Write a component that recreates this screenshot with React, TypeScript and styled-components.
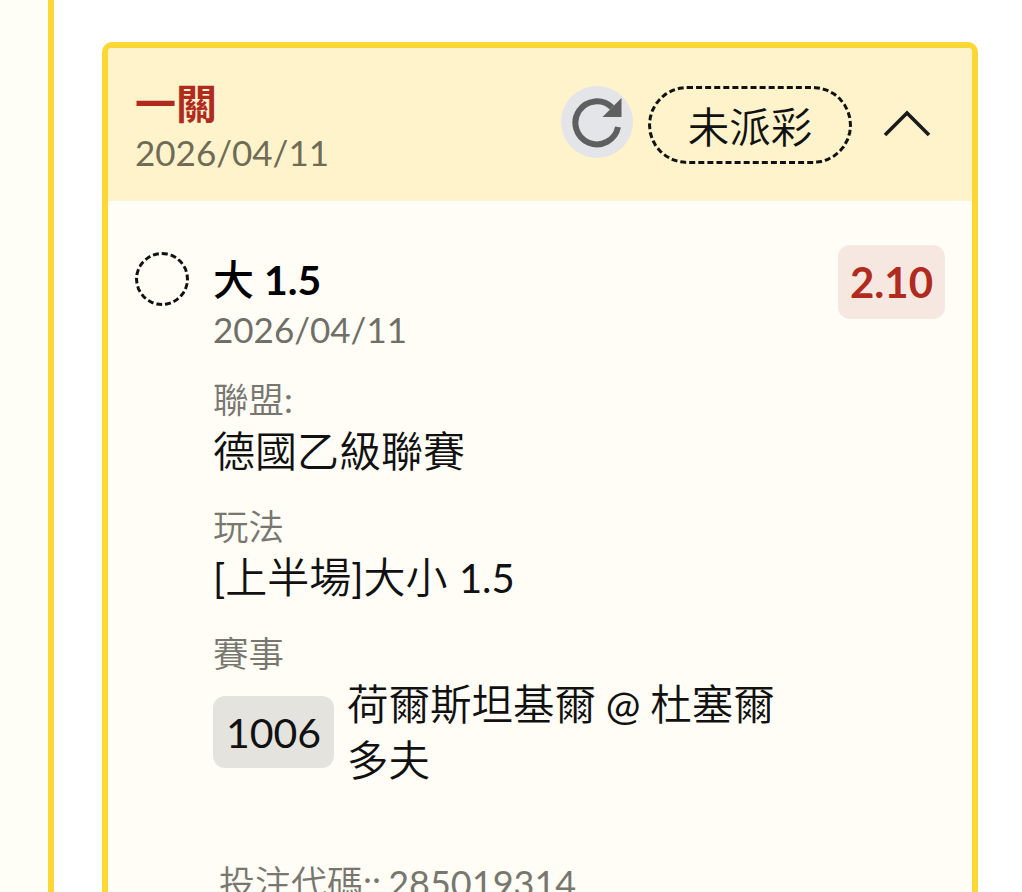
import React from "react";
import styled, { createGlobalStyle } from "styled-components";

const Global = createGlobalStyle`
  html, body { margin: 0; padding: 0; background: #fff; }
  body { font-family: Lato, "Noto Sans CJK TC", sans-serif; }
`;
const Page = styled.div`
  display: flex; width: 1022px; height: 892px; overflow: hidden; background: #fff;
`;
const Rail = styled.div`
  width: 48px; flex: none; background: #fffef6; border-right: 6px solid #fdd835;
`;
const Main = styled.div`
  flex: 1; padding: 42px 44px 0 48px; min-width: 0;
`;
const Card = styled.section`
  border: 6px solid #fdd835; border-radius: 10px; background: #fffdf5; overflow: hidden; height: 1000px;
`;
const Header = styled.header`
  height: 153px; background: #fff3cc; display: flex; align-items: center; padding: 0 40px 0 27px;
`;
const HeadLeft = styled.div`
  flex: 1; padding-top: 4px;
`;
const Title = styled.div`
  font-size: 41px; line-height: 50px; font-weight: 700; color: #b02a1e;
`;
const DateText = styled.div<{ $tone?: string }>`
  font-size: 35px; line-height: 46px; color: ${p => p.$tone || "#6f6b55"};
`;
const SubDate = styled(DateText)`
  margin: 1px 0 -2px;
`;
const RefreshBtn = styled.div`
  width: 72px; height: 72px; border-radius: 50%; background: #e3e5e8; display: flex; align-items: center; justify-content: center;
  margin-right: 15px; margin-top: -5px;
`;
const StatusPill = styled.div`
  width: 204px; height: 78px; box-sizing: border-box; border: 3px dashed #111; border-radius: 39px; font-size: 41.5px; font-weight: 350; color: #111;
  display: flex; align-items: center; justify-content: center; margin-right: 30px;
`;
const Chevron = styled.svg`
  margin-top: -4px; flex: none;
`;
const Body = styled.div`
  padding: 44px 27px 0 27px;
`;
const Row = styled.div`
  display: flex; align-items: flex-start;
`;
const Radio = styled.div`
  width: 54px; height: 54px; flex: none; box-sizing: border-box; border: 3px dashed #111; border-radius: 50%; margin: 7px 24px 0 0;
`;
const Content = styled.div`
  flex: 1; min-width: 0;
`;
const Pick = styled.div`
  font-size: 41px; line-height: 50px; font-weight: 700; color: #000; margin-top: 10px;
`;
const PickWord = styled.span`
  font-weight: 500;
`;
const Latin = styled.span`
  font-weight: 400;
`;
const ValueLatin = styled(Latin)`
  font-size: 40px;
`;
const Odds = styled.div`
  width: 107px; height: 74px; flex: none; border-radius: 12px; background: #f6e8e1; color: #b02a1e; font-size: 42px; font-weight: 700;
  display: flex; align-items: center; justify-content: center;
`;
const Field = styled.div`
  margin-top: 28px;
`;
const Label = styled.div`
  font-size: 35.5px; line-height: 44px; font-weight: 350; color: #777770; margin-bottom: 2.5px;
`;
const Value = styled.div`
  font-size: 42px; line-height: 52px; font-weight: 350; color: #111;
`;
const MatchRow = styled.div`
  display: flex; align-items: center; width: 570px; margin-top: -2.5px;
`;
const Code = styled.div`
  width: 121px; height: 72px; flex: none; border-radius: 12px; background: #e4e3de; color: #111; font-size: 41px;
  display: flex; align-items: center; justify-content: center; margin-right: 13px;
`;
const MatchName = styled.div`
  font-size: 41.5px; line-height: 56px; font-weight: 350; color: #111; word-spacing: -1.5px;
`;
const BetCode = styled.div`
  font-size: 36px; line-height: 44px; font-weight: 350; color: #777770; margin-top: 73px; margin-left: 6px; word-spacing: -2px;
`;

export default function App() {
  return (
    <Page>
      <Global />
      <Rail />
      <Main>
        <Card>
          <Header>
            <HeadLeft>
              <Title>一關</Title>
              <DateText>2026/04/11</DateText>
            </HeadLeft>
            <RefreshBtn>
              <svg width="52" height="52" viewBox="0 0 52 52" fill="none">
                <path d="M47 31A21.5 21.5 0 1 1 41 11.5" stroke="#5f5f5f" strokeWidth="6" />
                <path d="M50.5 2v19h-19z" fill="#5f5f5f" />
              </svg>
            </RefreshBtn>
            <StatusPill>未派彩</StatusPill>
            <Chevron width="50" height="30" viewBox="0 0 50 30" fill="none">
              <path d="M3 27 25 5l22 22" stroke="#1a1a1a" strokeWidth="3.6" />
            </Chevron>
          </Header>
          <Body>
            <Row>
              <Radio />
              <Content>
                <Pick><PickWord>大</PickWord> 1.5</Pick>
                <SubDate $tone="#6f6f68">2026/04/11</SubDate>
                <Field>
                  <Label>聯盟<Latin>:</Latin></Label>
                  <Value>德國乙級聯賽</Value>
                </Field>
                <Field>
                  <Label>玩法</Label>
                  <Value><ValueLatin>[</ValueLatin>上半場<ValueLatin>]</ValueLatin>大小 <ValueLatin>1.5</ValueLatin></Value>
                </Field>
                <Field>
                  <Label>賽事</Label>
                  <MatchRow>
                    <Code>1006</Code>
                    <MatchName>荷爾斯坦基爾 <Latin>@</Latin> 杜塞爾多夫</MatchName>
                  </MatchRow>
                </Field>
                <BetCode>投注代碼<Latin>:: 285019314</Latin></BetCode>
              </Content>
              <Odds>2.10</Odds>
            </Row>
          </Body>
        </Card>
      </Main>
    </Page>
  );
}
